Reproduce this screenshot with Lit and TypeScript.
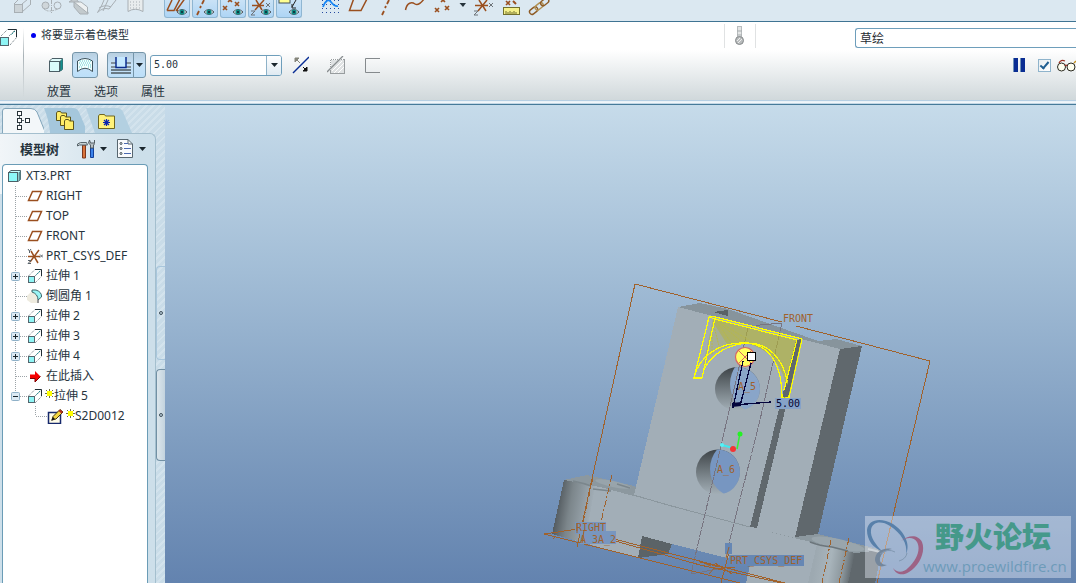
import { LitElement, html, svg, css, nothing } from "lit";
import type { SVGTemplateResult, TemplateResult } from "lit";
import { customElement, property } from "lit/decorators.js";

const BROWN = "#9a4f1f";

const icon = (x: number, y: number, w: number, h: number, body: SVGTemplateResult) => html`
  <svg width=${w} height=${h} viewBox="${x} ${y} ${w} ${h}" fill="none" aria-hidden="true">${body}</svg>
`;

const eye = (x: number, y: number) => svg`
  <path d="M${x - 5} ${y}q5 -5 10 0q-5 5 -10 0z" fill="#e8eef0" stroke="#4a5358" />
  <circle cx=${x} cy=${y} r="2.6" fill="#0d8a84" /><circle cx=${x} cy=${y} r="1" fill="#102030" />
`;

const cross = (x: number, y: number, r = 2, c = BROWN) => svg`
  <path d="M${x - r} ${y - r}l${2 * r} ${2 * r}M${x + r} ${y - r}l${-2 * r} ${2 * r}" stroke=${c} stroke-width="1.6" />
`;

const cube = svg`
  <path d="M1.500 4L4 1.500H14.500V12L12 14.500" fill="#dffbfb" stroke="#4b5e66" />
  <path d="M12.500 4L14.500 2V12L12.500 14z" fill="#12908e" stroke="#2b7678" />
  <rect x="1.500" y="4.500" width="10" height="10" fill="#d9fbfb" stroke="#4b5e66" />
`;

const extrude = svg`
  <path d="M1.500 8L8 1.500M8 15L15 8M8 8L14.500 2" stroke="#67747a" stroke-dasharray="1 1" />
  <path d="M8 1.500H14.500V8" stroke="#1f2c33" />
  <path d="M13 3L9 7" stroke="#1d8d90" stroke-dasharray="2 1" />
  <rect x="1.500" y="8.500" width="6" height="6" fill="#8ff5f5" stroke="#53656d" />
`;

const datum = svg`<path d="M5.500 3.500H14.500L10.500 12.500H1.500z" stroke=${BROWN} stroke-width="1.500" />`;

const glyphs: Record<string, SVGTemplateResult> = {
  part: svg`
    <path d="M0.500 4.500L3 2.500H12.500V11.500L10 13.500" fill="#c8ffff" stroke="#4c6067" />
    <path d="M10.500 4.500L12.500 3V11.500L10.500 13z" fill="#5a8f95" />
    <rect x="0.500" y="4.500" width="9" height="9" fill="#8df8f8" stroke="#4c6067" />`,
  datum,
  csys: svg`
    <path d="M1 8.500H13M4 3L11 15M12 2L3 14" stroke=${BROWN} stroke-width="1.500" />
    <path d="M1 1l1.500 2l1.500-2M2.500 3v2M1 12.500h3l-3 3h3M13 6.500l3 3m0-3l-3 3" stroke="#59636a" />`,
  extrude,
  round: svg`
    <path d="M0 8L6 2L10 7V15H4L0 12z" fill="#eeebdf" />
    <path d="M5 2H9Q15 4 14.500 9L11 12Q11 6 5 4z" fill="#9af5f5" stroke="#3a6468" />
    <path d="M11 12v3" stroke="#333" />`,
  arrow: svg`<path d="M3 6.500H8V3L13.500 8.500L8 14V10.500H3z" fill="#f40000" /><path d="M3 10.500h5v3.500l5.500-5.500" stroke="#7d0000" />`,
  sketch: svg`
    <rect x="1.500" y="4.500" width="12" height="11" fill="#fffce8" stroke="#16286c" stroke-width="1.500" />
    <path d="M5 12L6 8.500L13 1.500L16 4L9 11z" fill="#f3d540" stroke="#413410" />
    <path d="M13 1.500L16 4L14.500 5.500L11.500 3z" fill="#b52a1c" /><path d="M4 13l2-4l2 2z" fill="#111" />`,
};

const star = html`
  <svg class="star" width="9" height="9" viewBox="0 0 9 9" aria-hidden="true">
    <path d="M1 1l7 7M8 1L1 8M4.500 0v9M0 4.500h9" stroke="#4b4a12" stroke-width="0.800" />
    <rect x="2" y="2" width="5" height="5" fill="#ffff00" />
  </svg>
`;

const caret = svg`<path d="M0 0H7L3.500 4z" fill="#1a262d" />`;

@customElement("top-toolbar")
class TopToolbar extends LitElement {
  static styles = css`
    :host { display: flex; height: 21px; background: #dbe8f1; border-bottom: 1px solid #3f7493; overflow: hidden; }
    button { appearance: none; display: block; border: 0; padding: 0; margin: 0; background: none; height: 18px; }
    svg { display: block; }
    .grip { width: 15px; display: flex; justify-content: center; }
    .grip.first { width: 8px; justify-content: flex-start; }
    .grip.last { width: 13px; }
    .dots { width: 4px; height: 18px; background-image: radial-gradient(#7d909d 35%, transparent 40%); background-size: 2px 2px; }
    .on { width: 26px; margin: 0 1px; box-sizing: border-box; border: 1px solid #8fb6d2; border-top: 0; border-radius: 0 0 3px 3px;
      background: linear-gradient(#c9e2f6, #aed5f5); overflow: hidden; }
  `;

  private plain(label: string, x: number, w: number, body: SVGTemplateResult) {
    return html`<button type="button" aria-label=${label}>${icon(x, 0, w, 18, body)}</button>`;
  }

  private toggle(label: string, x: number, body: SVGTemplateResult) {
    return html`<button type="button" class="on" aria-pressed="true" aria-label=${label}>${icon(x, 0, 24, 17, body)}</button>`;
  }

  render() {
    const g = "#a8afb4";
    return html`
      <span class="grip first"><span class="dots"></span></span>
      ${this.plain("Extrude", 8, 28, svg`<path d="M14 4L20 -2M22 12L31 4M22 4L28 -1M30.500 0V4" stroke=${g} /><rect x="14.500" y="4.500" width="8" height="8" fill="#ccd3d7" stroke=${g} />`)}
      ${this.plain("Revolve", 36, 28, svg`<path d="M51.500 0V14" stroke=${g} stroke-dasharray="4 1 1 1" /><circle cx="45.500" cy="5.500" r="3.500" fill="#cfd6da" stroke=${g} /><circle cx="57.500" cy="5.500" r="3.500" stroke=${g} /><path d="M44 9q4 4 14 0" stroke=${g} stroke-dasharray="2 1" />`)}
      ${this.plain("Sweep", 64, 28, svg`<path d="M69 2L75 -2L88 12V14H80L74 7V2z" fill="#c3cacd" stroke=${g} /><path d="M74 2H81L87.500 7V13z" fill="#edf0f1" stroke=${g} />`)}
      ${this.plain("Blend", 92, 28, svg`<path d="M97.500 12.500Q102 6 104 0M97.500 12.500Q103 7 109 9L116 0M99 8q6-4 12-1M103 11L108 0" stroke=${g} />`)}
      ${this.plain("Boundary", 120, 28, svg`<path d="M128 -2V11.500Q135 7 143 11.500V-2z" fill="#e8eced" stroke=${g} /><path d="M130 2h11M130 5h11M130 8h11" stroke=${g} stroke-dasharray="1 2" />`)}
      <span class="grip"><span class="dots"></span></span>
      ${this.toggle("Planes", 165, svg`<path d="M167 10.500H174L180 -1M167 10.500L172 0M176 11L186 -3M176 10.500H178" stroke=${BROWN} stroke-width="1.500" />${eye(182, 12)}`)}
      ${this.toggle("Axes", 193, svg`<path d="M197 15L199 11M200 8L201 6M202 4L204 0" stroke=${BROWN} stroke-width="1.800" />${eye(209, 12)}`)}
      ${this.toggle("Points", 221, svg`${cross(237, 4)}${cross(225, 8)}${cross(230, 0)}${eye(238, 12)}`)}
      ${this.toggle("Coordinate systems", 249, svg`<path d="M252 5.500H264M255 10L264 0M256 0L262 10" stroke=${BROWN} stroke-width="1.500" /><path d="M251 11h4l-4 4h4M266 3l4 4m0-4l-4 4" stroke="#6d7378" />${eye(266, 12)}`)}
      ${this.toggle("Annotations", 277, svg`<rect x="279" y="-2" width="11" height="5" fill="#ffff91" stroke="#42505a" /><path d="M296 0L292 7M292 4v4h4" stroke="#222" />${eye(294, 12)}`)}
      <span class="grip last"><span class="dots"></span></span>
      ${this.plain("Sketch", 316, 28, svg`<path d="M322 .500h18M322 4.500h18M322 8.500h18M322 12.500h18" stroke="#2549a0" stroke-dasharray="1 3" /><path d="M323 7Q327 -3 331 2T338 6" stroke="#1685f5" stroke-width="1.800" />`)}
      ${this.plain("Plane", 344, 28, svg`<path d="M354 -2L349.500 10.500H361L367.500 -2" stroke=${BROWN} stroke-width="1.500" />`)}
      ${this.plain("Axis", 372, 28, svg`<path d="M382 15L384 11M385 8L386 6M387 4L389 0" stroke=${BROWN} stroke-width="1.800" />`)}
      ${this.plain("Curve", 400, 28, svg`<path d="M405.500 10C407 2 412 2 415 4S421 3 424 -1" stroke=${BROWN} stroke-width="1.500" />`)}
      ${this.plain("Point", 428, 28, svg`${cross(437, 10)}${cross(447, 8)}${cross(443, 0)}`)}
      ${this.plain("Point options", 456, 12, svg`<path d="M459.500 3H466L463 7z" fill="#26343c" />`)}
      ${this.plain("Coordinate system", 468, 28, svg`<path d="M475 5.500H488M478 11L487 0M479 0L486 11" stroke=${BROWN} stroke-width="1.500" /><path d="M474 11h4l-4 4h4M489 3l4 4m0-4l-4 4" stroke="#6d7378" />`)}
      ${this.plain("Analysis", 496, 28, svg`${cross(508, 3)}<path d="M513 1l3 3" stroke=${BROWN} stroke-width="2" /><rect x="503.500" y="7.500" width="16" height="7" fill="#f5f18b" stroke="#716f2c" /><path d="M506 14v-3m2 3v-2m2 2v-3m2 3v-2m2 2v-3m2 3v-2" stroke="#716f2c" />`)}
      ${this.plain("Reference", 524, 28, svg`<g transform="rotate(-38 540 5)" stroke="#8d5a24" stroke-width="1.400"><rect x="527" y="3" width="9" height="5" rx="2.500" /><rect x="534" y="3" width="9" height="5" rx="2.500" stroke="#b19154" /><rect x="541" y="3" width="9" height="5" rx="2.500" /></g>`)}
    `;
  }
}

@customElement("feature-dashboard")
class FeatureDashboard extends LitElement {
  static styles = css`
    :host { display: block; border-bottom: 1px solid #467a99; font-family: "Liberation Sans", "Noto Sans CJK SC", sans-serif; color: #27343d; }
    .panel { display: flex; height: 78px; background: linear-gradient(#fff 0, #fff 36%, #d0d8db 100%); overflow: hidden; }
    .strip { height: 4px; background: linear-gradient(#b6cfe3 25%, #e6eff6 25%, #f4f8fb 75%, #c4d7e5 75%); }
    .feature { width: 23px; box-sizing: border-box; padding-top: 6px; }
    .rule { width: 1px; margin: 6px 1px 2px 0; background: linear-gradient(transparent, #a8b1b6 40%, transparent); }
    .body { flex: 1; min-width: 0; }
    svg { display: block; }
    button { appearance: none; border: 0; margin: 0; padding: 0; background: none; color: inherit; font: inherit; }
    .line { display: flex; align-items: center; }
    .first { height: 26px; }
    .second { height: 34px; padding-left: 24px; }
    .third { height: 20px; padding-left: 22px; gap: 23px; font-size: 12px; line-height: 20px; }
    .message { flex: 1; display: flex; align-items: center; gap: 5px; padding-left: 6px; font-size: 11px; line-height: 16px; }
    .bullet { width: 5px; height: 5px; border-radius: 3px; background: #0000f0; }
    .thermo { align-self: flex-end; width: 30px; height: 24px; display: flex; justify-content: center; align-items: center; border: solid #e0e2e3; border-width: 0 1px; margin-right: 99px; }
    .filter { appearance: none; align-self: flex-end; width: 221px; height: 20px; box-sizing: border-box; padding: 0 4px; border: 1px solid #6e9ebb; border-right: 0;
      border-radius: 3px 0 0 3px; background: #fff; font: 12px/18px "Noto Sans CJK SC", sans-serif; color: #1f2a31; }
    .solid { padding: 0 8px 0 0; }
    .on { display: flex; align-items: center; justify-content: center; height: 26px; box-sizing: border-box; border: 1px solid #7595a9; border-radius: 3px;
      background: linear-gradient(#b8cfe0, #c7e2f7 50%, #bcdff9); }
    .surface { width: 26px; margin-right: 9px; }
    .depth { width: 27px; border-radius: 3px 0 0 3px; }
    .more { width: 13px; margin-left: -1px; margin-right: 4px; border-radius: 0 3px 3px 0; }
    .combo { display: flex; width: 132px; height: 21px; box-sizing: border-box; border: 1px solid #6e9ebb; border-radius: 3px; background: #fff; overflow: hidden; margin-right: 10px; }
    .combo input { flex: 1; min-width: 0; border: 0; padding: 0 3px; outline: 0; background: none; color: #27343d; font: 10px/18px "DejaVu Sans Mono", monospace; }
    .combo button { width: 15px; display: flex; align-items: center; justify-content: center; border-left: 1px solid #8eb2c8; background: linear-gradient(#fff, #dfeaf2); }
    .tools { display: flex; gap: 18px; flex: 1; align-items: center; }
    .confirm { display: flex; align-items: center; height: 20px; }
    .pause { margin-right: 12px; }
    .check { appearance: none; width: 13px; height: 13px; margin: 0 6px 0 0; border: 1px solid #8fb4cc; background:
      linear-gradient(135deg, #e9eef1, #fff); display: grid; place-items: center; }
    .check:checked::after { content: ""; width: 3px; height: 7px; border: solid #215f92; border-width: 0 2px 2px 0; transform: rotate(40deg); margin-top: -2px; }
  `;

  render() {
    return html`
      <div class="panel">
        <div class="feature">${icon(0, 28, 18, 19, svg`
          <path d="M1 36L8 29M10 45L17 37M9 36L16 29" stroke="#67747a" stroke-dasharray="1 1" />
          <path d="M8 29.500H16.500V37" stroke="#1f2c33" /><path d="M15 31L11 35" stroke="#1d8d90" stroke-dasharray="2 1" />
          <rect x="0.500" y="37.500" width="8" height="8" fill="#8ff5f5" stroke="#53656d" />`)}</div>
        <div class="rule"></div>
        <div class="body">
          <div class="line first">
            <div class="message"><span class="bullet"></span><span>将要显示着色模型</span></div>
            <div class="thermo">${icon(0, 0, 12, 20, svg`<rect x="3.500" y="0.500" width="4" height="12" fill="#e4e6e6" stroke="#b8bcbe" /><path d="M3 5h5M3 9h5" stroke="#a8adaf" /><circle cx="5.500" cy="14.500" r="4" fill="#b9bcbd" stroke="#85898b" /><path d="M3 15l3-3M4 17l4-4" stroke="#eee" />`)}</div>
            <select class="filter" aria-label="过滤器"><option>草绘</option></select>
          </div>
          <div class="line second">
            <button type="button" class="solid" aria-label="实体">${icon(1, 0, 15, 16, cube)}</button>
            <button type="button" class="on surface" aria-label="曲面" aria-pressed="true">${icon(0, 0, 18, 16, svg`
              <path d="M1.500 14.500V4Q9 -1 16.500 4V14.500Q9 8 1.500 14.500z" fill="#f1ffff" stroke="#3f525b" />
              <path d="M4 4h11M3 6h12M4 8h11M3 10h4M12 10h4" stroke="#65c7cb" stroke-dasharray="1 1" />`)}</button>
            <button type="button" class="on depth" aria-label="深度">${icon(0, 0, 22, 18, svg`
              <path d="M1 7H6M16 7H21M1 11H6M16 11H21" stroke="#6d777c" stroke-width="1.500" /><path d="M1 14H21M1 17H21" stroke="#4e5a60" stroke-width="1.500" />
              <path d="M6 1V11.500H16V1" fill="#c5e8ff" stroke="#0c2d8e" stroke-width="1.500" />`)}</button>
            <button type="button" class="on more" aria-label="深度选项">${icon(0, 0, 7, 4, caret)}</button>
            <div class="combo"><input aria-label="深度值" value="5.00" /><button type="button" aria-label="值列表">${icon(0, 0, 7, 4, caret)}</button></div>
            <div class="tools">
              <button type="button" aria-label="反向">${icon(292, 56, 17, 18, svg`<path d="M293 73L309 57" stroke="#082d94" stroke-width="1.500" /><path d="M295 58h4l-4 4zM296 59l4 4" fill="#85857a" stroke="#85857a" /><path d="M307 71h-4l4-4zM303 67l4 4" fill="#111" stroke="#111" />`)}</button>
              <button type="button" aria-label="移除材料" disabled>${icon(327, 55, 19, 19, svg`<rect x="330.500" y="58.500" width="14" height="14" fill="#dfe2e3" stroke="#989d9f" /><path d="M330 58.500h14M330.500 58v12" stroke="#fff" stroke-dasharray="1 1" /><path d="M332 70l10-10M334 72l10-10M338 72l6-6" stroke="#fff" /><path d="M327 71L343 55" stroke="#888d8f" stroke-width="1.300" />`)}</button>
              <button type="button" aria-label="加厚草绘" disabled>${icon(365, 57, 17, 17, svg`<path d="M381 58.500H366.500V72.500H381" stroke="#858a8d" />`)}</button>
            </div>
            <div class="confirm">
              <button type="button" class="pause" aria-label="暂停">${icon(0, 0, 13, 14, svg`<path d="M3 0V14M10 0V14" stroke="#0a2d93" stroke-width="4" /><path d="M.500 0V14M7.500 0V14" stroke="#6f92b8" />`)}</button>
              <input class="check" type="checkbox" checked aria-label="预览" />
              <button type="button" aria-label="预览几何">${icon(0, 0, 19, 13, svg`<circle cx="4.500" cy="8" r="4" fill="#fffff0" stroke="#2a2a20" /><circle cx="14" cy="8" r="4" fill="#fffff0" stroke="#2a2a20" /><path d="M8 7q1-2 2 0M2 4Q4 0 8 2" stroke="#9a3020" stroke-width="1.200" /><path d="M17 4l2-2" stroke="#c49020" stroke-width="1.500" />`)}</button>
            </div>
          </div>
          <div class="line third">
            <button type="button">放置</button><button type="button">选项</button><button type="button">属性</button>
          </div>
        </div>
      </div>
      <div class="strip"></div>
    `;
  }
}

interface Node { text: string; glyph: string; expand?: "+" | "-"; fresh?: boolean; level?: number; last?: boolean }

const NODES: Node[] = [
  { text: "XT3.PRT", glyph: "part", level: 0 },
  { text: "RIGHT", glyph: "datum" },
  { text: "TOP", glyph: "datum" },
  { text: "FRONT", glyph: "datum" },
  { text: "PRT_CSYS_DEF", glyph: "csys" },
  { text: "拉伸 1", glyph: "extrude", expand: "+" },
  { text: "倒圆角 1", glyph: "round" },
  { text: "拉伸 2", glyph: "extrude", expand: "+" },
  { text: "拉伸 3", glyph: "extrude", expand: "+" },
  { text: "拉伸 4", glyph: "extrude", expand: "+" },
  { text: "在此插入", glyph: "arrow" },
  { text: "拉伸 5", glyph: "extrude", expand: "-", fresh: true, last: true },
  { text: "S2D0012", glyph: "sketch", fresh: true, level: 2, last: true },
];

@customElement("model-tree")
class ModelTree extends LitElement {
  @property({ attribute: false }) nodes: Node[] = NODES;

  static styles = css`
    :host { display: flex; width: 165px; flex: none; font-family: "Noto Sans", "Noto Sans CJK SC", sans-serif; color: #27343d;
      background: repeating-linear-gradient(135deg, #c9dce8 0 3px, #d3e3ed 3px 5px); }
    svg { display: block; }
    button { appearance: none; display: flex; align-items: center; border: 0; margin: 0; padding: 0; background: none; }
    .main { width: 156px; display: flex; flex-direction: column; }
    .tabs { display: flex; height: 28px; }
    .tab { height: 28px; }
    .card { flex: 1; display: flex; flex-direction: column; border: solid #a4bfce; border-width: 1px 1px 0 0; border-radius: 0 6px 0 0; padding: 0 7px 0 2px;
      background: linear-gradient(90deg, #f1f5f8, #ccdfea 90%) 0 0 / 100% 60px no-repeat, #cddfea; }
    .head { display: flex; align-items: center; height: 30px; padding-left: 18px; gap: 9px; }
    .title { flex: none; margin: 0; width: 48px; font-size: 13px; line-height: 18px; font-weight: 700; white-space: nowrap; }
    .menu { flex: none; gap: 5px; }
    .list { flex: 1; margin: 0; padding: 1px 0 0; list-style: none; background: #fff; border: 1px solid #6a9cb6; border-bottom: 0; border-radius: 4px 4px 0 0; }
    .row { display: flex; align-items: center; height: 20px; padding-left: 2px; font-size: 12px; line-height: 20px; white-space: nowrap; }
    .root { padding-left: 5px; }
    .root .text { margin-left: 2px; }
    .deep { padding-left: 24px; }
    .text { margin-left: 3px; }
    .star { margin: -5px 0 0 2px; }
    .star + .text { margin-left: 0; }
    .deep .star { margin-left: 3px; }
    .sash { width: 9px; display: flex; flex-direction: column; padding-top: 161px; gap: 9px; }
    .handle { height: 94px; width: 9px; box-sizing: border-box; justify-content: center; border: 1px solid #a8c6dc; border-right: 0; border-radius: 4px 0 0 4px; }
    .handle.strong { border-color: #7290a4; height: 92px; background: linear-gradient(90deg, #dce6ec, #c3d3de); }
    .dot { width: 2px; height: 2px; border: 1px solid #41515b; border-radius: 2px; background: #b8ccd9; }
  `;

  private gutter(n: Node): TemplateResult {
    const deep = n.level === 2;
    const w = deep ? 20 : 22;
    const x = deep ? 8.5 : 10.5;
    const art = icon(0, 0, w, 20, svg`
      <path d="M${x} 0V${n.last ? 10 : 20}M${x} 10.500H${w}" stroke="#9da4a8" stroke-dasharray="1 1" shape-rendering="crispEdges" />
      ${n.expand ? svg`
        <rect x="6.500" y="6.500" width="8" height="8" rx="1" fill="#dceaf4" stroke="#8fb1c8" />
        <path d=${n.expand === "+" ? "M8 10.500H13M10.500 8V13" : "M8 10.500H13"} stroke="#18242b" />` : nothing}`);
    return n.expand ? html`<button type="button" aria-label=${n.expand === "+" ? "展开" : "折叠"}>${art}</button>` : art;
  }

  render() {
    return html`
      <div class="main">
        <div class="tabs" role="tablist">
          <button class="tab" type="button" role="tab" aria-selected="true" aria-label="模型树">${icon(0, 105, 44, 28, svg`
            <path d="M2.500 134V111Q2.500 108.500 5 108.500H31Q35 108.500 37 112L46 134" fill="#f3f7f9" stroke="#82a5ba" />
            <path d="M19.500 115V128M19.500 120.500H24" stroke="#59656b" />
            <rect x="17.500" y="111.500" width="4" height="4" fill="#fff" stroke="#28343a" /><rect x="17.500" y="118.500" width="4" height="4" fill="#fff" stroke="#28343a" />
            <rect x="17.500" y="125.500" width="4" height="4" fill="#fff" stroke="#28343a" /><rect x="25.500" y="118.500" width="4" height="4" fill="#fff" stroke="#28343a" />`)}</button>
          <button class="tab" type="button" role="tab" aria-selected="false" aria-label="文件夹浏览器">${icon(44, 105, 41, 28, svg`
            <path d="M44 108H73Q77 108 79 112L88 133H50Q49 120 44 108z" fill="#a5c7dc" />
            <g fill="#ffee68" stroke="#5d551d"><path d="M56.500 120.500V113l1-1.500h3l1 1.500H66.500V120.500z" /><path d="M60.500 125.500V117l1-1.500h3l1 1.500H70.500V125.500z" /><path d="M64.500 129.500V121l1-1.500h3l1 1.500H73.500V129.500z" /></g>`)}</button>
          <button class="tab" type="button" role="tab" aria-selected="false" aria-label="收藏夹">${icon(85, 105, 50, 28, svg`
            <path d="M86 108H117Q121 108 123 112L132 133H95z" fill="#b3d0e1" />
            <path d="M98.500 128.500V116l1-1.500h5l1 1.500H114.500V128.500z" fill="#fff27a" stroke="#6e661f" />
            <path d="M106.500 119v7M103 122.500h7M104 120l5 5M109 120l-5 5" stroke="#0b24b0" stroke-width="1.200" />`)}</button>
        </div>
        <div class="card">
          <div class="head">
            <h2 class="title">模型树</h2>
            <button class="menu" type="button" aria-label="设置">${icon(77, 138, 18, 20, svg`
              <path d="M82.500 144h3v13h-3z" fill="#d9743c" stroke="#7d371d" /><path d="M77.500 145v-2l3-1.500h6l1 2.500h-8z" fill="#c6d2d5" stroke="#58656b" />
              <path d="M90.500 147h3v9.500h-3z" fill="#3c83ea" stroke="#12409a" /><path d="M89.500 139l-1 3l2 2v3h3v-3l2-2l-1-3v3h-4z" fill="#b7bfc3" stroke="#555f64" />`)}${icon(0, 0, 7, 4, caret)}</button>
            <button class="menu" type="button" aria-label="显示">${icon(116, 138, 18, 20, svg`
              <path d="M117.500 138.500H128L132.500 143V156.500H117.500z" fill="#f9fbfd" stroke="#57666f" /><path d="M128 138.500V143h4.500" stroke="#57666f" />
              <g stroke="#3d4a52"><circle cx="121" cy="142.500" r="1" /><circle cx="121" cy="147.500" r="1" /><circle cx="121" cy="152.500" r="1" /></g>
              <path d="M124 142.500h4M124 147.500h7M124 152.500h7" stroke="#4b6ab0" />`)}${icon(0, 0, 7, 4, caret)}</button>
          </div>
          <ul class="list">
            ${this.nodes.map((n) => html`
              <li class="row ${n.level === 0 ? "root" : n.level === 2 ? "deep" : ""}">
                ${n.level === 0 ? nothing : this.gutter(n)}
                ${icon(0, 0, 16, 16, glyphs[n.glyph])}${n.fresh ? star : nothing}<span class="text">${n.text}</span>
              </li>`)}
          </ul>
        </div>
      </div>
      <div class="sash">
        <button class="handle" type="button" aria-label="浏览器"><span class="dot"></span></button>
        <button class="handle strong" type="button" aria-label="导航器"><span class="dot"></span></button>
      </div>
    `;
  }
}

@customElement("model-view")
class ModelView extends LitElement {
  static styles = css`
    :host { display: block; position: relative; flex: 1; min-width: 0; overflow: hidden;
      background: linear-gradient(#c6dbea, #a2bdd6 35%, #7f9dc0 70%, #6383af); }
    .scene { position: absolute; width: 100%; height: 100%; }
    .label { font: 10px "DejaVu Sans Mono", monospace; fill: #a0622c; }
    .dim { fill: #050530; }
    .brand { position: absolute; right: 5px; bottom: 5px; width: 206px; height: 62px; background: rgba(235, 240, 250, 0.42); display: flex; }
    .logo { flex: none; }
    .words { margin-left: -2px; display: flex; flex-direction: column; gap: 1px; }
    .name { margin-left: 12px; font: 900 29px/39px "Noto Sans CJK SC", sans-serif; color: #45998a; }
    .site { font: 15px/20px "Open Sans", sans-serif; color: #6d9bb9; text-decoration: none; }
  `;

  render() {
    return html`
      <svg class="scene" viewBox="165 105 911 478" preserveAspectRatio="xMaxYMax slice" fill="none" role="img" aria-label="XT3.PRT">
        <defs>
          <linearGradient id="bore" x1="0" y1="0" x2="0" y2="1"><stop offset="0" stop-color="#3d4347" /><stop offset="0.600" stop-color="#7c868c" /><stop offset="1" stop-color="#a4b0b8" /></linearGradient>
          <linearGradient id="left" gradientUnits="userSpaceOnUse" x1="555" y1="505" x2="592" y2="511"><stop offset="0" stop-color="#4d5459" /><stop offset="0.400" stop-color="#7c868b" /><stop offset="1" stop-color="#a2aeb7" /></linearGradient>
          <linearGradient id="right" gradientUnits="userSpaceOnUse" x1="815" y1="560" x2="853" y2="566"><stop offset="0" stop-color="#9da9b1" /><stop offset="0.400" stop-color="#a8b4bb" /><stop offset="0.750" stop-color="#8c979d" /><stop offset="1" stop-color="#5f676c" /></linearGradient>
          <clipPath id="h5"><ellipse cx="737.500" cy="389" rx="22.500" ry="22" /></clipPath>
          <clipPath id="h6"><ellipse cx="718" cy="472" rx="22" ry="22.500" /></clipPath>
        </defs>
        <g shape-rendering="crispEdges">
          <path d="M564 480L587 475L634 486L664 497L795 530L818 534L882 550L855 554L750 528L634 501z" fill="#8c989f" />
          <path d="M564 480Q575 482 600 487L664 504L750 527L855 553L848 583H746L750 565L727 558L672 544L642 536L638 558L552 534z" fill="#a2aeb7" />
          <path d="M564 480Q575 482 595 486L585 543L552 534z" fill="url(#left)" />
          <path d="M817 544L855 553L848 583H808z" fill="url(#right)" />
          <path d="M855 553L882 550L875 583H848z" fill="#60686d" />
          <path d="M642 536L672 544L668 554L638 558z" fill="#5b6367" />
          <path d="M678 307L700 303L728 309L818 341L836 339L862 346L840 349z" fill="#87949c" />
          <path d="M713 312L728 310V316z" fill="#596166" />
          <path d="M678 307L840 349L795 538L750 527L634 495z" fill="#a2aeb7" />
          <path d="M840 349L862 346L818 534L795 537z" fill="#60686d" />
          <path d="M713 312L728 311V315z" fill="#596166" />
          <path d="M796 340L802 339L757 528L750 527z" fill="#60686d" />
          <path d="M634 495L664 504L750 527" stroke="#8b979e" />
        </g>
        <ellipse cx="613" cy="484" rx="18" ry="3" transform="rotate(12 613 484)" fill="#98a4ab" />
        <path d="M573 481q10 2 18 5M593 489l18 2M617 484l13 4" stroke="#7b868c" stroke-width="1.500" />
        <ellipse cx="838" cy="544" rx="27" ry="5" transform="rotate(12 838 544)" fill="#99a5ac" />
        <path d="M810 542q10 4 22 5M832 547l16 4" stroke="#6c767c" stroke-width="1.500" />
        <path d="M868 549l12 3" stroke="#b8bfc3" stroke-width="2" />
        <g clip-path="url(#h5)"><rect x="715" y="367" width="45" height="44" fill="url(#bore)" /><ellipse cx="753" cy="384" rx="23" ry="27" fill="#89a5c9" /></g>
        <g clip-path="url(#h6)"><rect x="696" y="449" width="44" height="46" fill="url(#bore)" /><ellipse cx="733" cy="469" rx="23" ry="27" fill="#7796c1" /></g>
        <g stroke="#777480" shape-rendering="crispEdges">
          <path d="M748 328L727 420L691 574M782 323L760 420L729 543" stroke-dasharray="8 1" /><path d="M748 328L760 325L782 323M691 574L723 568" />
        </g>

        <path d="M713 319L797 340L786 385Q778 350 745 343Q718 343 703 366z" fill="#b5b533" fill-opacity="0.620" />
        <path d="M713 322L727 344L704 364z" fill="#a2aeb7" fill-opacity="0.600" />
        <path d="M717 322L732 344M717 321L742 342M717 321L752 342M714 326L720 350M712 334L712 354" stroke="#b8b84a" stroke-dasharray="2 1" />
        <g stroke="#ffff00" stroke-width="1.200" shape-rendering="crispEdges">
          <path d="M709 317L694 378H702L715 318M709 317L712 316L802 339L789 397M709 317L715 319L797 340L784 390" />
          <path d="M694 378C698 358 718 342 744 343C768 343 782 362 782 398H789C788 362 771 343 747 343C722 345 705 360 702 377" />
        </g>
        <path d="M797 342L801 341L789 395L784 398z" fill="#60686d" /><path d="M802 339L789 397" stroke="#ff0" />

        <g stroke="#a0622c" shape-rendering="crispEdges">
          <path d="M577 547L635 284L782 322M796 326L930 361L877 583" />
          <path d="M544 534L578 529L610 538M544 534L740 583M610 538L785 583M615 541L700 565L782 583M700 562L720 567M731 545L721 583" />
          <path d="M715 563L732 574M713 569L735 567M556 536L553 539" />
          <path d="M612 475L601 522M593 478L583 522M831 540L822 583M849 538L839 583" stroke-dasharray="7 2 2 2" />
        </g>

        <rect x="575" y="522" width="31" height="12" fill="#7896bf" /><rect x="580" y="531" width="36" height="13" fill="#7896bf" />
        <rect x="725" y="543" width="7" height="11" fill="#6687b4" /><rect x="729" y="555" width="75" height="11" fill="#6687b4" />
        <path d="M577 523V533M584 530L582 543M729 547L726 558" stroke="#a0622c" />
        <g class="label">
          <text x="783" y="322">FRONT</text><text x="576" y="531">RIGHT</text><text x="580" y="543">A_3</text><text x="598" y="543">A_2</text>
          <text x="730" y="564">PRT_CSYS_DEF</text><text x="738" y="390">A_5</text><text x="717" y="473">A_6</text>
        </g>
        <path d="M709 574L716 566M704 563l7 3" stroke="#a0622c" />

        <circle cx="745" cy="357" r="9.500" fill="#ffff62" stroke="#d66562" stroke-width="1.200" /><path d="M738 350L752 364M752 350L738 364" stroke="#d66562" />
        <rect x="747.500" y="352.500" width="8" height="8" fill="#fff" stroke="#000" />
        <path d="M743 361L733 408M751 363L740 406M733 405L771 402" stroke="#04043c" stroke-width="1.300" shape-rendering="crispEdges" />
        <path d="M732 403L741 402V406L732 407z" fill="#04043c" />
        <rect x="775" y="398" width="26" height="11" fill="#86a2c8" /><text class="label dim" x="776" y="407">5.00</text>
        <path d="M739.500 436L737 449" stroke="#34ef34" stroke-width="1.500" /><circle cx="740" cy="434" r="2.500" fill="#23f323" />
        <path d="M722 445L733 448" stroke="#41e8ef" stroke-width="2" /><circle cx="722" cy="445" r="2" fill="#53f3f7" /><circle cx="733" cy="449" r="3" fill="#f43434" />
      </svg>
      <div class="brand">
        <svg class="logo" width="60" height="62" viewBox="865 516 60 62" aria-hidden="true">
          <path fill-rule="evenodd" fill="#5880aa" d="M906 554C911 544 904 531 893 524C881 517 868 519 867 530C867 540 873 548 882 551C876 545 870 537 871 530C872 522 881 520 890 526C901 533 908 544 906 554z" />
          <path fill-rule="evenodd" fill="#9d6385" d="M901 541C908 535 918 534 922 542C926 552 919 566 909 572C903 576 896 575 893 568C897 573 903 573 908 568C917 560 921 549 917 542C914 537 907 537 901 541z" />
          <path fill="#73869c" d="M892 549C882 547 875 553 875 560C876 566 881 568 887 565C882 565 879 562 880 558C881 553 886 550 892 549z" />
          <path fill="none" stroke="#8198b1" d="M880 554Q888 548 895 552M899 561Q906 559 907 553" />
        </svg>
        <div class="words"><span class="name">野火论坛</span><a class="site" href="#">www.proewildfire.cn</a></div>
      </div>
    `;
  }
}

@customElement("app-root")
class AppRoot extends LitElement {
  static styles = css`
    :host { display: flex; flex-direction: column; height: 100vh; overflow: hidden; }
    .work { display: flex; flex: 1; min-height: 0; }
  `;

  render() {
    return html`
      <top-toolbar></top-toolbar>
      <feature-dashboard></feature-dashboard>
      <main class="work"><model-tree></model-tree><model-view></model-view></main>
    `;
  }
}
